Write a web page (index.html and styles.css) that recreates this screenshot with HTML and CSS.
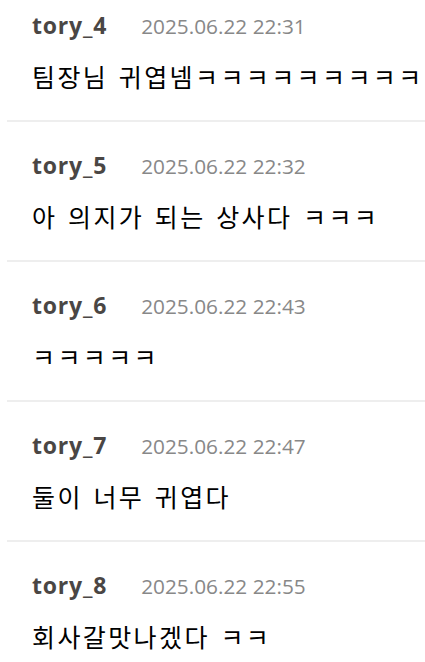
FILE: index.html
```html
<!DOCTYPE html>
<html lang="ko">
<head>
  <meta charset="UTF-8">
  <meta name="viewport" content="width=device-width, initial-scale=1.0">
  <title>댓글</title>
  <link rel="stylesheet" href="styles.css">
</head>
<body>
  <ul class="comments">
    <li class="comment">
      <div class="comment-head">
        <span class="author">tory_4</span>
        <span class="date">2025.06.22 22:31</span>
      </div>
      <p class="text">팀장님 귀엽넴ㅋㅋㅋㅋㅋㅋㅋㅋㅋㅋㅋㅋㅋㅋ</p>
    </li>
    <li class="comment">
      <div class="comment-head">
        <span class="author">tory_5</span>
        <span class="date">2025.06.22 22:32</span>
      </div>
      <p class="text">아 의지가 되는 상사다 ㅋㅋㅋ</p>
    </li>
    <li class="comment">
      <div class="comment-head">
        <span class="author">tory_6</span>
        <span class="date">2025.06.22 22:43</span>
      </div>
      <p class="text">ㅋㅋㅋㅋㅋ</p>
    </li>
    <li class="comment">
      <div class="comment-head">
        <span class="author">tory_7</span>
        <span class="date">2025.06.22 22:47</span>
      </div>
      <p class="text">둘이 너무 귀엽다</p>
    </li>
    <li class="comment">
      <div class="comment-head">
        <span class="author">tory_8</span>
        <span class="date">2025.06.22 22:55</span>
      </div>
      <p class="text">회사갈맛나겠다 ㅋㅋ</p>
    </li>
  </ul>
</body>
</html>
```

FILE: styles.css
```css
html, body {
  overflow-x: hidden;
}
body {
  margin: 0;
  background: #fff;
  font-family: 'Open Sans', 'Noto Sans CJK KR', sans-serif;
  color: #000;
}
.comments {
  list-style: none;
  margin: -18px 0 0 7px;
  padding: 0;
}
.comment {
  padding: 28px 0 26px 25px;
  border-bottom: 2px solid #eeeeee;
}
.comment-head {
  display: flex;
  align-items: baseline;
  gap: 34px;
  height: 30px;
  line-height: 30px;
}
.author {
  font-size: 23px;
  font-weight: 700;
  letter-spacing: 0.8px;
  color: #4a4644;
}
.date {
  font-size: 20.8px;
  color: #888888;
}
.text {
  margin: 18px 0 0;
  font-family: 'Noto Sans CJK KR', sans-serif;
  font-size: 25px;
  line-height: 36px;
  letter-spacing: 2.4px;
  word-spacing: 1.2px;
  word-break: keep-all;
  white-space: nowrap;
}
```
